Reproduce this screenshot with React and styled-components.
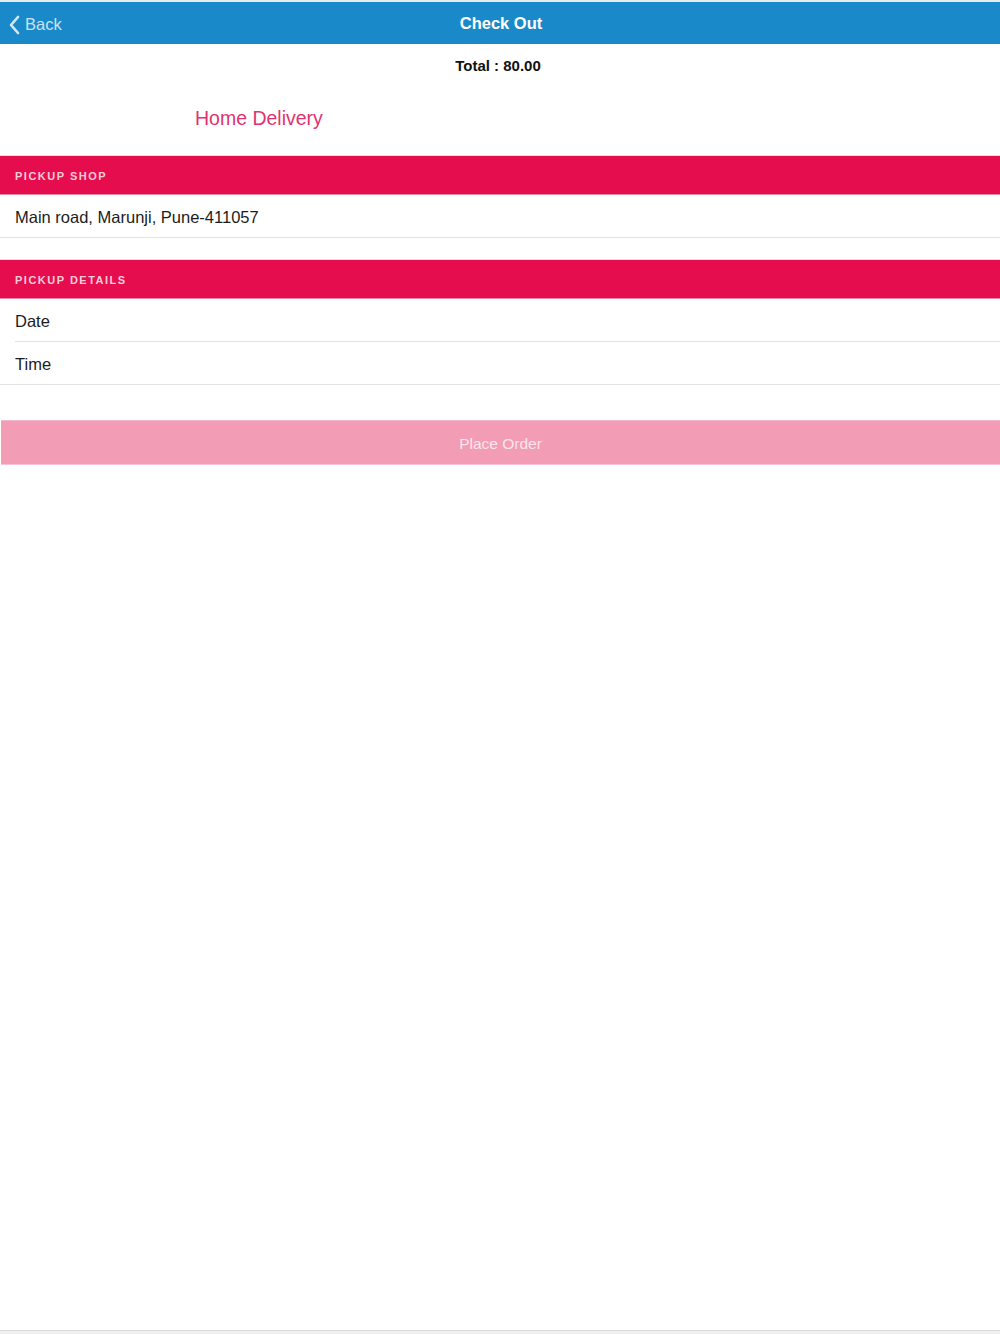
import React from "react";
import styled, { createGlobalStyle } from "styled-components";

const Global = createGlobalStyle`
  html, body { margin: 0; padding: 0; background: #fff; }
  body { font-family: "Liberation Sans", Arial, sans-serif; -webkit-font-smoothing: antialiased; }
  * { box-sizing: border-box; }
`;

const Page = styled.div`
  height: 1334px;
  display: flex;
  flex-direction: column;
  background: #fff;
`;

const TopStrip = styled.div`
  height: 2px;
  background: #e6ecef;
`;

const NavBar = styled.header`
  height: 42px;
  background: #1a89c9;
  display: grid;
  grid-template-columns: 1fr auto 1fr;
  align-items: center;
  padding: 0 8px;
`;

const BackButton = styled.button`
  justify-self: start;
  display: flex;
  align-items: center;
  gap: 5px;
  background: none;
  border: none;
  padding: 3px 0 0;
  color: #c9e2f3;
  font-family: inherit;
  font-size: 16.5px;
  cursor: pointer;
`;

const Title = styled.h1`
  margin: 0 0 0 2px;
  color: #fff;
  font-size: 16.5px;
  font-weight: bold;
`;

const Content = styled.main`
  flex: 1;
  display: flex;
  flex-direction: column;
`;

const Total = styled.div`
  text-align: center;
  font-size: 15px;
  font-weight: bold;
  color: #111;
  padding-top: 13px;
  margin-right: 4px;
  height: 36px;
`;

const DeliveryTab = styled.div`
  height: 75px;
  padding-left: 195px;
  padding-top: 27px;
  color: #e2336e;
  font-size: 19.5px;
`;

const SectionHeader = styled.div`
  height: 40px;
  background: #e50d4d;
  border-top: 1px solid #f0d8e0;
  border-bottom: 1px solid #e38aa5;
  display: flex;
  align-items: center;
  padding: 2px 0 0 15px;
  color: #f8cbd8;
  font-size: 11px;
  font-weight: bold;
  letter-spacing: 1.5px;
  text-transform: uppercase;
`;

const Row = styled.div`
  height: 43px;
  display: flex;
  align-items: center;
  padding: 2px 0 0 15px;
  font-size: 16.5px;
  color: #1c1c1c;
  position: relative;
  &::after {
    content: "";
    position: absolute;
    bottom: 0;
    right: 0;
    left: ${(p) => (p.$inset ? "15px" : "0")};
    height: 1px;
    background: #e3e3e3;
  }
`;

const Gap = styled.div`
  height: ${(p) => p.$h}px;
`;

const PlaceOrder = styled.button`
  margin-left: 1px;
  width: calc(100% - 1px);
  height: 45px;
  border: none;
  border-top: 1px solid #f5b6c8;
  border-bottom: 1px solid #f7c3d2;
  background: #f29db5;
  color: #fce4ec;
  font-family: inherit;
  font-size: 15.5px;
  padding: 2px 0 0 0;
  cursor: default;
`;

const Footer = styled.div`
  height: 4px;
  border-top: 1px solid #d9d9d9;
  background: #efefef;
`;

export default function App() {
  return (
    <Page>
      <Global />
      <TopStrip />
      <NavBar>
        <BackButton>
          <svg width="12" height="20" viewBox="0 0 12 20">
            <path d="M10 2 L3 10 L10 18" fill="none" stroke="#d3e8f6" strokeWidth="2.6" strokeLinecap="round" strokeLinejoin="round" />
          </svg>
          Back
        </BackButton>
        <Title>Check Out</Title>
        <span />
      </NavBar>
      <Content>
        <Total>Total : 80.00</Total>
        <DeliveryTab>Home Delivery</DeliveryTab>
        <SectionHeader>Pickup Shop</SectionHeader>
        <Row>Main road, Marunji, Pune-411057</Row>
        <Gap $h={21} />
        <SectionHeader>Pickup Details</SectionHeader>
        <Row $inset>Date</Row>
        <Row>Time</Row>
        <Gap $h={35} />
        <PlaceOrder>Place Order</PlaceOrder>
      </Content>
      <Footer />
    </Page>
  );
}
